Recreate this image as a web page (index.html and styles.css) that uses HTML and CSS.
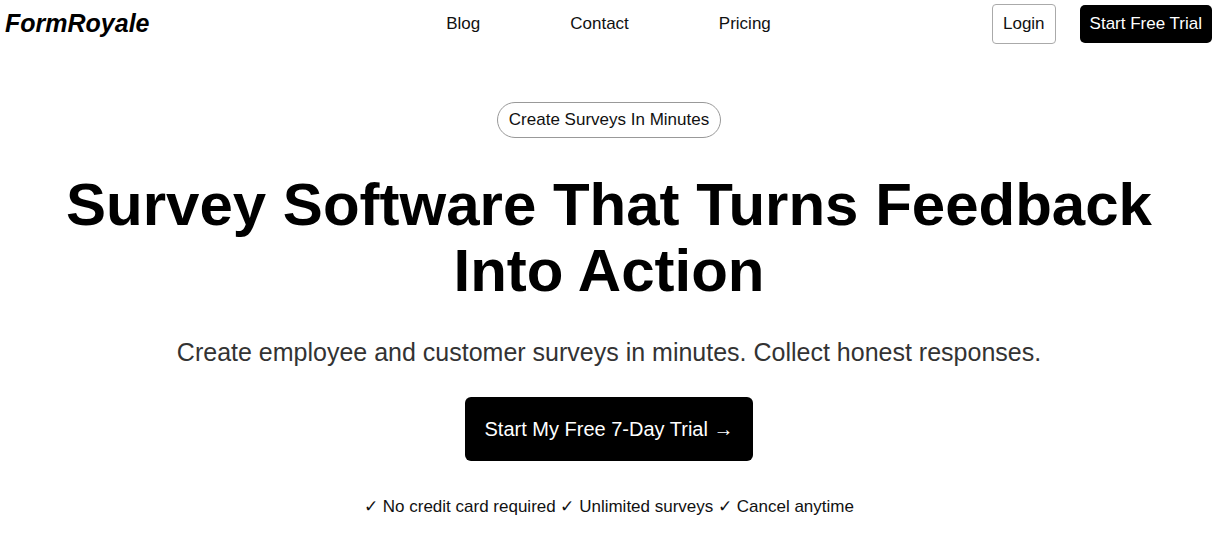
FILE: index.html
```html
<!DOCTYPE html>
<html lang="en">
<head>
    <meta charset="UTF-8">
    <meta name="viewport" content="width=device-width, initial-scale=1.0">
    <title>FormRoyale - Survey Software</title>
    <link rel="stylesheet" href="styles.css">
</head>
<body>
    <header class="site-header">
        <a href="#" class="logo">FormRoyale</a>

        <nav class="main-nav">
            <a href="#">Blog</a>
            <a href="#">Contact</a>
            <a href="#">Pricing</a>
        </nav>

        <div class="header-actions">
            <a href="#" class="login-btn">Login</a>
            <a href="#" class="trial-btn">Start Free Trial</a>
        </div>
    </header>

    <main class="hero">
        <div class="hero-badge">Create Surveys In Minutes</div>
        <h1>Survey Software That Turns Feedback Into Action</h1>
        <p class="hero-subtitle">Create employee and customer surveys in minutes. Collect honest responses.</p>
        <a href="#" class="cta-btn">Start My Free 7-Day Trial →</a>
        <div class="hero-perks">✓ No credit card required ✓ Unlimited surveys ✓ Cancel anytime</div>
    </main>
</body>
</html>
```

FILE: styles.css
```css
* {
    margin: 0;
    padding: 0;
    box-sizing: border-box;
    font-family: 'Liberation Sans', Arial, sans-serif;
}

body {
    background: #ffffff;
    color: #000;
    padding-right: 10px;
}

a {
    text-decoration: none;
    color: inherit;
}

/* Header */
.site-header {
    display: grid;
    grid-template-columns: 1fr auto 1fr;
    align-items: center;
    padding: 2px 6px 0 5px;
    height: 45px;
}

.logo {
    font-size: 25px;
    font-weight: 700;
    font-style: italic;
    color: #000;
}

.main-nav {
    display: flex;
    gap: 90px;
    font-size: 17px;
    color: #111;
}

.header-actions {
    display: flex;
    justify-content: flex-end;
    align-items: center;
    gap: 24px;
}

.login-btn {
    font-size: 17px;
    padding: 9px 10px;
    line-height: 20px;
    border: 1px solid #aaa;
    border-radius: 4px;
    color: #111;
}

.trial-btn {
    font-size: 17px;
    padding: 9px 10px;
    line-height: 20px;
    background: #000;
    color: #fff;
    border-radius: 5px;
}

/* Hero */
.hero {
    display: flex;
    flex-direction: column;
    align-items: center;
    text-align: center;
    padding-top: 57px;
}

.hero-badge {
    font-size: 17px;
    line-height: 20px;
    padding: 7px 11px;
    border: 1px solid #999;
    border-radius: 999px;
    color: #111;
}

.hero h1 {
    font-size: 60px;
    line-height: 66px;
    font-weight: 700;
    margin-top: 34px;
    max-width: 1110px;
}

.hero-subtitle {
    font-size: 25px;
    line-height: 36px;
    color: #333;
    margin-top: 30px;
}

.cta-btn {
    margin-top: 27px;
    background: #000;
    color: #fff;
    font-size: 20px;
    line-height: 24px;
    padding: 20px 20px;
    border-radius: 6px;
}

.hero-perks {
    margin-top: 36px;
    font-size: 17px;
    line-height: 20px;
    color: #111;
}
```
